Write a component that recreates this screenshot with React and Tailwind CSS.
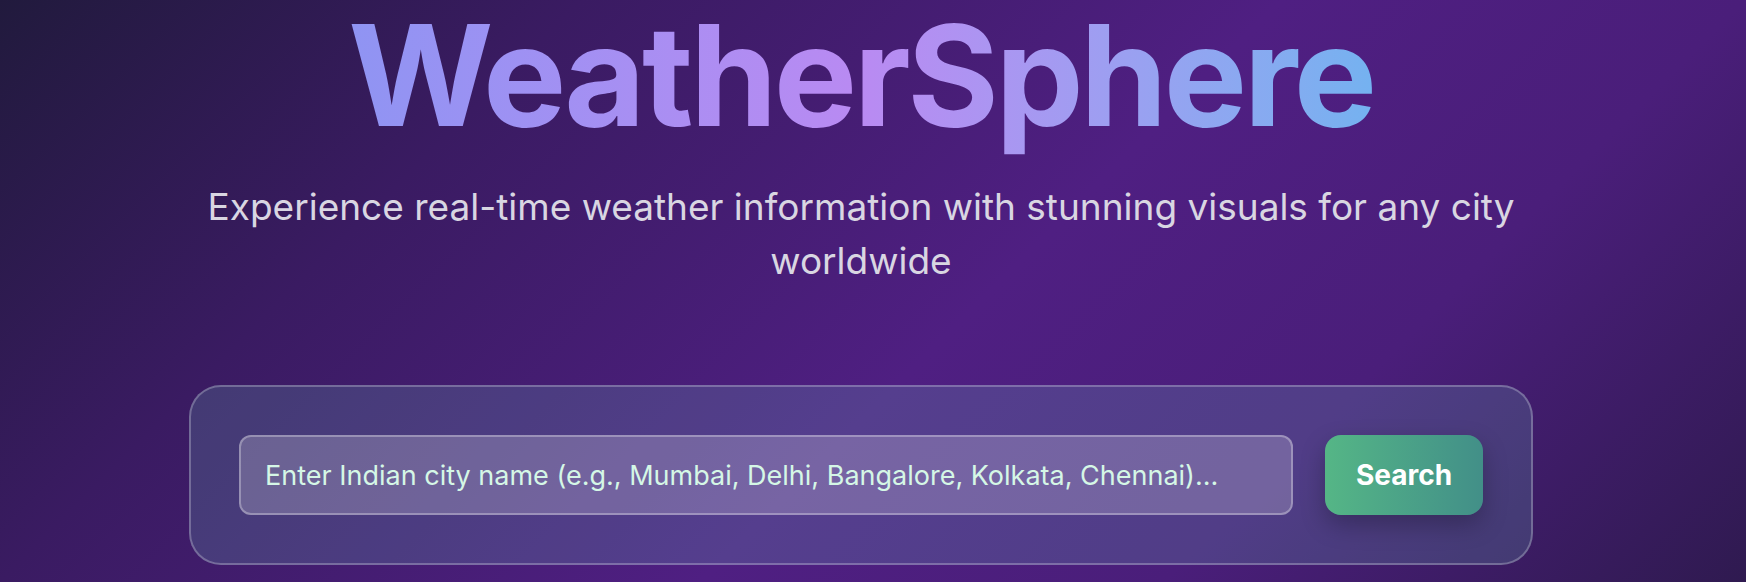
export default function App() {
  return (
    <div className="min-h-[582px] w-full overflow-hidden bg-[linear-gradient(135deg,#211a3d_0%,#3a1b62_25%,#4f1f82_55%,#4a1e7a_75%,#2f1a50_100%)] font-['Inter',sans-serif]">
      <div className="pr-[24px]">
        <div className="mx-auto flex w-[1344px] flex-col items-center">
          <h1 className="inline-block bg-gradient-to-r from-[#8f94f3] via-[#b98af2] to-[#74b2f0] bg-clip-text pt-[5px] pb-[20px] text-[140px] leading-none font-bold tracking-tight text-transparent">
            WeatherSphere
          </h1>
          <p className="mt-[15px] text-center text-[37px] leading-[54px] text-[#d9d6e2]">
            Experience real-time weather information with stunning visuals for any city worldwide
          </p>
          <div className="mt-[97px] flex w-full items-center gap-[32px] rounded-[32px] border-2 border-white/25 bg-[#7aefd4]/15 p-[48px]">
            <input
              type="text"
              placeholder="Enter Indian city name (e.g., Mumbai, Delhi, Bangalore, Kolkata, Chennai)..."
              className="h-[80px] flex-1 rounded-[12px] border-2 border-white/30 bg-white/20 px-[24px] text-[27px] text-[#d5f7e6] outline-none placeholder:text-[#d5f7e6]"
            />
            <button className="h-[80px] w-[158px] rounded-[16px] bg-gradient-to-r from-[#55b686] to-[#428f88] text-[28px] font-bold text-white shadow-[0_10px_25px_rgba(0,0,0,0.25)]">
              Search
            </button>
          </div>
        </div>
      </div>
    </div>
  );
}
